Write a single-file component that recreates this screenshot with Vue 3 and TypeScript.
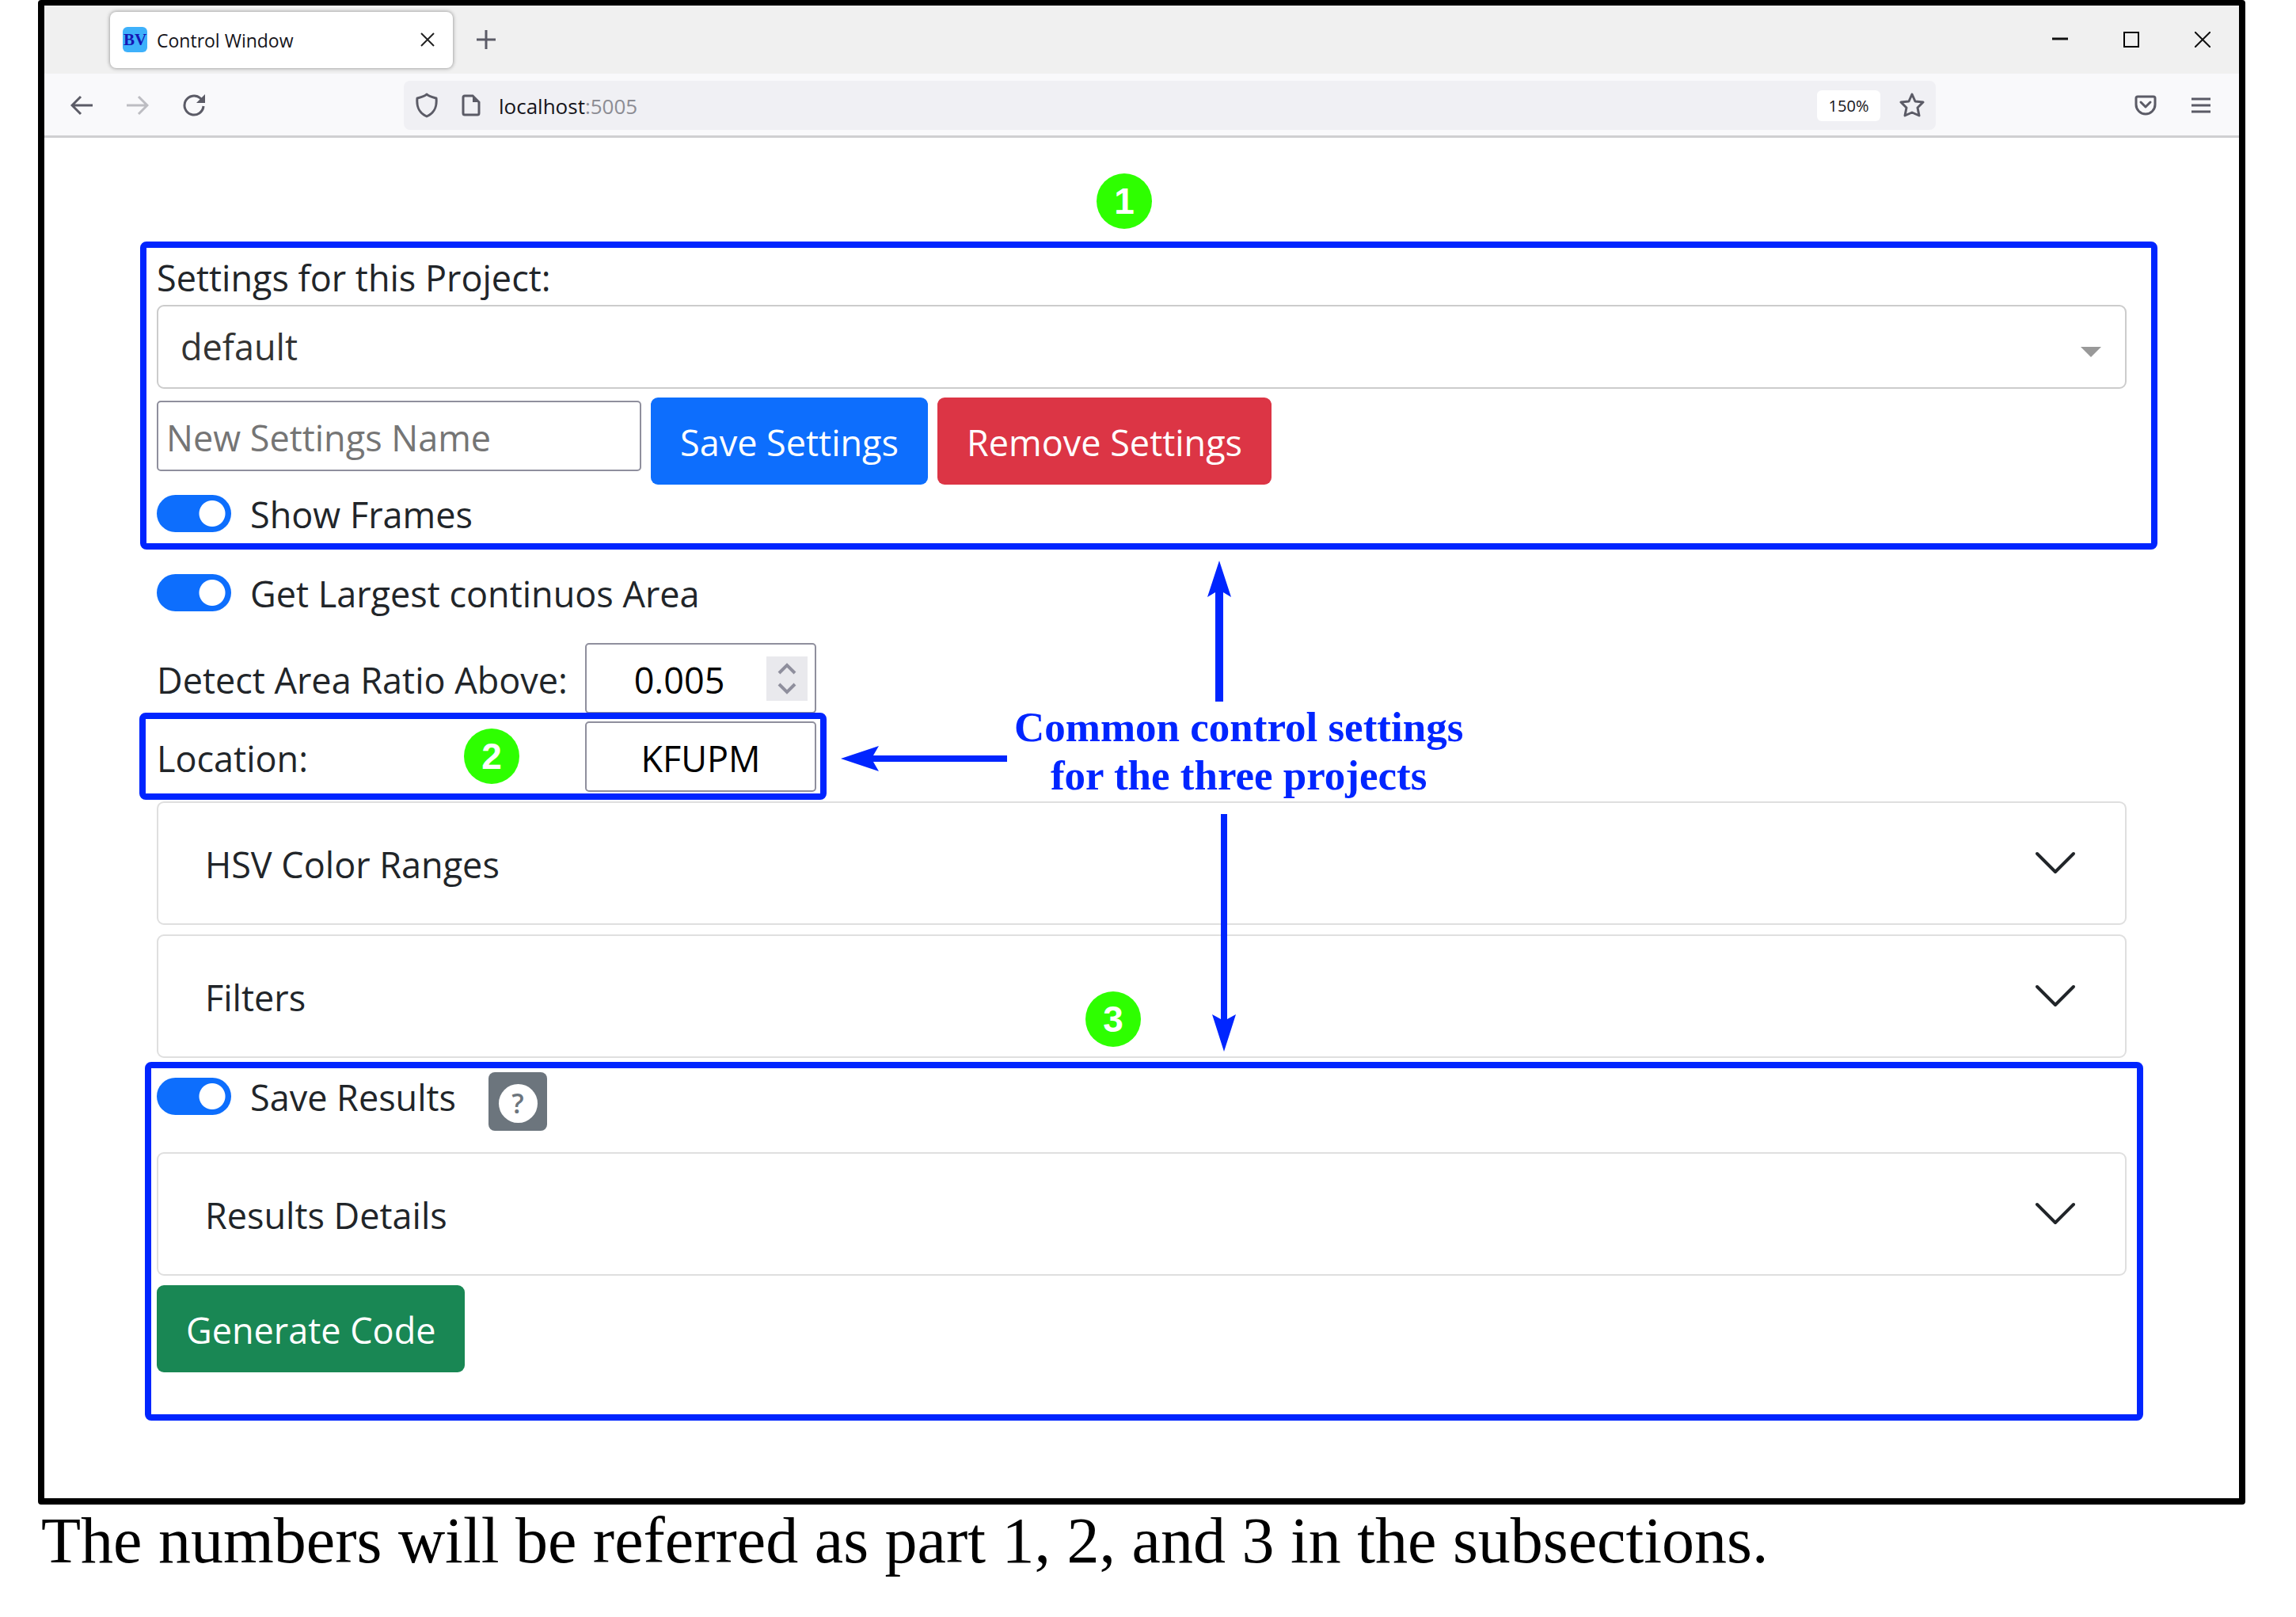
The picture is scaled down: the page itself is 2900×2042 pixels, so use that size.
<script setup lang="ts">
import { ref } from 'vue'

interface Badge {
  label: string
  left: number
  top: number
}

const project = ref('default')
const projects = ['default']
const settingsName = ref('')
const showFrames = ref(true)
const largestArea = ref(true)
const saveResults = ref(true)
const areaRatio = ref(0.005)
const place = ref('KFUPM')
const openPanel = ref('')

const badges: Badge[] = [
  { label: '1', left: 1329, top: 45 },
  { label: '2', left: 530, top: 746 },
  { label: '3', left: 1315, top: 1078 },
]

function step(amount: number) {
  areaRatio.value = Number((areaRatio.value + amount).toFixed(3))
}

function toggle(name: string) {
  openPanel.value = openPanel.value === name ? '' : name
}
</script>

<template>
  <figure class="figure">
    <div class="window">
      <header class="tabstrip">
        <div class="tab">
          <span class="favicon">BV</span>
          <span class="tab-title">Control Window</span>
          <button class="bare" aria-label="Close tab">
            <svg width="20" height="20" viewBox="0 0 20 20"><path d="M2 2L18 18M18 2L2 18" fill="none" stroke="#222" stroke-width="2" /></svg>
          </button>
        </div>
        <button class="bare" aria-label="New tab">
          <svg width="24" height="24" viewBox="0 0 24 24"><path d="M12 0V24M0 12H24" stroke="#5b5b66" stroke-width="3" /></svg>
        </button>
        <div class="window-buttons">
          <button class="bare" aria-label="Minimize">
            <svg width="20" height="20" viewBox="0 0 20 20"><path d="M0 9H20" stroke="#111" stroke-width="3" /></svg>
          </button>
          <button class="bare" aria-label="Maximize">
            <svg width="20" height="20" viewBox="0 0 20 20"><rect x="1" y="1" width="18" height="18" fill="none" stroke="#000" stroke-width="2" /></svg>
          </button>
          <button class="bare" aria-label="Close">
            <svg width="20" height="20" viewBox="0 0 20 20"><path d="M0 0L20 20M20 0L0 20" stroke="#111" stroke-width="2" /></svg>
          </button>
        </div>
      </header>

      <nav class="toolbar">
        <div class="history">
          <button class="bare" aria-label="Back">
            <svg width="28" height="28" viewBox="0 0 28 28"><path d="M28 14H2M13 3L2 14L13 25" fill="none" stroke="#5b5b66" stroke-width="3" /></svg>
          </button>
          <button class="bare" aria-label="Forward">
            <svg width="28" height="28" viewBox="0 0 28 28"><path d="M0 14H26M15 3L26 14L15 25" fill="none" stroke="#bdbdc2" stroke-width="3" /></svg>
          </button>
          <button class="bare" aria-label="Reload">
            <svg width="28" height="28" viewBox="0 0 28 28">
              <path d="M26 15A12 12 0 1 1 22 5L25 8" fill="none" stroke="#5b5b66" stroke-width="3" />
              <path d="M28 0V11H17Z" fill="#5b5b66" />
            </svg>
          </button>
        </div>
        <div class="urlbar">
          <svg width="30" height="32" viewBox="0 0 30 32"><path d="M15 2C18 5 23 6 27 7C28 17 26 25 15 30C4 25 2 17 3 7C7 6 12 5 15 2Z" fill="none" stroke="#5b5b66" stroke-width="3" stroke-linejoin="round" /></svg>
          <svg width="24" height="28" viewBox="0 0 24 28">
            <path d="M4 2H14L22 10V24Q22 26 20 26H4Q2 26 2 24V4Q2 2 4 2Z" fill="none" stroke="#5b5b66" stroke-width="3" />
            <path d="M14 1L23 10H14Z" fill="#5b5b66" />
          </svg>
          <span class="address">localhost<span class="port">:5005</span></span>
          <button class="zoom">150%</button>
          <button class="bare" aria-label="Bookmark">
            <svg width="32" height="32" viewBox="0 0 32 32"><path d="M16 2L20 11L30 12L23 19L25 29L16 25L7 29L9 19L2 12L12 11Z" fill="none" stroke="#5b5b66" stroke-width="3" stroke-linejoin="round" /></svg>
          </button>
        </div>
        <div class="tools">
          <button class="bare" aria-label="Save to Pocket">
            <svg width="28" height="26" viewBox="0 0 28 26">
              <path d="M4 2H24Q26 2 26 4V12A12 12 0 0 1 2 12V4Q2 2 4 2Z" fill="none" stroke="#5b5b66" stroke-width="3" />
              <path d="M8 9L14 15L20 9" fill="none" stroke="#5b5b66" stroke-width="3" stroke-linecap="round" stroke-linejoin="round" />
            </svg>
          </button>
          <button class="bare" aria-label="Menu">
            <svg width="24" height="24" viewBox="0 0 24 24"><path d="M0 4H24M0 12H24M0 20H24" stroke="#5b5b66" stroke-width="3" /></svg>
          </button>
        </div>
      </nav>

      <main class="page">
        <section class="group settings">
          <label class="text-label" for="project">Settings for this Project:</label>
          <div class="select-wrap">
            <select id="project" v-model="project">
              <option v-for="name in projects" :key="name">{{ name }}</option>
            </select>
            <svg class="caret" width="26" height="13" viewBox="0 0 26 13"><path d="M0 0H26L13 13Z" fill="#999" /></svg>
          </div>
          <div class="name-row">
            <input v-model="settingsName" class="field name-field" type="text" placeholder="New Settings Name" aria-label="New Settings Name" />
            <button class="btn primary">Save Settings</button>
            <button class="btn danger">Remove Settings</button>
          </div>
          <label class="switch-row"><input v-model="showFrames" class="switch" type="checkbox" />Show Frames</label>
        </section>

        <label class="switch-row largest"><input v-model="largestArea" class="switch" type="checkbox" />Get Largest continuos Area</label>

        <div class="field-row ratio">
          <label class="text-label" for="ratio">Detect Area Ratio Above:</label>
          <div class="number">
            <input id="ratio" v-model="areaRatio" class="field short" type="number" step="0.001" />
            <div class="spinner">
              <button class="bare" aria-label="Increase" @click="step(0.001)">
                <svg width="24" height="16" viewBox="0 0 24 16"><path d="M2 13L12 3L22 13" fill="none" stroke="#8f8f9d" stroke-width="4" /></svg>
              </button>
              <button class="bare" aria-label="Decrease" @click="step(-0.001)">
                <svg width="24" height="16" viewBox="0 0 24 16"><path d="M2 3L12 13L22 3" fill="none" stroke="#8f8f9d" stroke-width="4" /></svg>
              </button>
            </div>
          </div>
        </div>

        <div class="group field-row location">
          <label class="text-label" for="location">Location:</label>
          <input id="location" v-model="place" class="field short" type="text" />
        </div>

        <button v-for="name in ['HSV Color Ranges', 'Filters']" :key="name" class="accordion" :aria-expanded="openPanel === name" @click="toggle(name)">
          <span class="accordion-title">{{ name }}</span>
          <svg width="52" height="30" viewBox="0 0 52 30"><path d="M3 3L26 26L49 3" fill="none" stroke="#212529" stroke-width="4" stroke-linecap="round" stroke-linejoin="round" /></svg>
        </button>

        <section class="group results">
          <div class="results-row">
            <label class="switch-row"><input v-model="saveResults" class="switch" type="checkbox" />Save Results</label>
            <button class="help" aria-label="Help"><span class="help-mark">?</span></button>
          </div>
          <button class="accordion" :aria-expanded="openPanel === 'Results Details'" @click="toggle('Results Details')">
            <span class="accordion-title">Results Details</span>
            <svg width="52" height="30" viewBox="0 0 52 30"><path d="M3 3L26 26L49 3" fill="none" stroke="#212529" stroke-width="4" stroke-linecap="round" stroke-linejoin="round" /></svg>
          </button>
          <button class="btn success">Generate Code</button>
        </section>

        <!-- Annotations drawn over the form -->
        <svg class="arrows" width="500" height="622" viewBox="0 0 500 622">
          <g fill="#0025ff">
            <path d="M478 0L493 46L483 40V178H473V40L463 46Z" />
            <path d="M0 250L48 234L41 246H210V254H41L48 266Z" />
            <path d="M484 620L469 573L480 579V320H488V579L499 573Z" />
          </g>
        </svg>
        <p class="callout">Common control settings<br />for the three projects</p>
        <span v-for="badge in badges" :key="badge.label" class="badge" :style="{ left: badge.left + 'px', top: badge.top + 'px' }">{{ badge.label }}</span>
      </main>
    </div>
    <figcaption class="caption">The numbers will be referred as part 1, 2, and 3 in the subsections.</figcaption>
  </figure>
</template>

<style>
body {
  background: #fff;
}
</style>

<style scoped>
* {
  box-sizing: border-box;
}

.figure {
  margin: 0;
  padding: 0 64px 0 48px;
}

.window {
  border: 8px solid #000;
  border-top-width: 7px;
  border-radius: 4px;
  background: #fff;
  color: #212529;
  font-family: "Open Sans", "Noto Sans", sans-serif;
  font-size: 45px;
  line-height: 68px;
}

button,
input,
select {
  margin: 0;
  font: inherit;
}

svg {
  display: block;
  flex: none;
}

.bare {
  padding: 0;
  border: 0;
  background: none;
}

.tabstrip {
  display: flex;
  align-items: center;
  height: 86px;
  padding: 0 36px 0 83px;
  background: #f0f0f0;
}

.tab {
  display: flex;
  align-items: center;
  gap: 12px;
  width: 433px;
  height: 71px;
  margin-right: 30px;
  padding: 0 22px 0 16px;
  border-radius: 8px;
  background: #fff;
  box-shadow: 0 0 5px rgba(0, 0, 0, 0.45);
  color: #15141a;
  font-size: 23px;
  line-height: 32px;
}

.favicon {
  width: 31px;
  height: 32px;
  border-radius: 6px;
  background: #3eb1fb;
  color: #1616b4;
  font-family: "Liberation Serif", serif;
  font-size: 21px;
  font-weight: bold;
  text-align: center;
}

.tab-title {
  flex: 1;
  padding-top: 2px;
}

.window-buttons {
  display: flex;
  gap: 70px;
  margin-left: auto;
}

.toolbar {
  display: flex;
  align-items: center;
  height: 81px;
  padding: 2px 36px 0 33px;
  border-bottom: 3px solid #cfcfd1;
  background: #f9f9fb;
}

.history {
  display: flex;
  gap: 43px;
  margin-right: 251px;
}

.urlbar {
  display: flex;
  flex: 1;
  align-items: center;
  height: 62px;
  padding: 0 14px;
  border-radius: 8px;
  background: #f0f0f4;
}

.address {
  flex: 1;
  margin-left: 23px;
  padding-top: 2px;
  color: #15141a;
  font-size: 26px;
  line-height: 32px;
}

.urlbar > svg + svg {
  margin-left: 29px;
}

.port {
  color: #8c8c93;
}

.zoom {
  width: 80px;
  height: 39px;
  margin-right: 24px;
  padding: 0;
  border: 0;
  border-radius: 6px;
  background: #fff;
  color: #15141a;
  font-size: 20px;
  line-height: 39px;
}

.tools {
  display: flex;
  align-items: center;
  gap: 44px;
  margin-left: 251px;
}

.page {
  position: relative;
  padding: 143px 142px 107px;
}

/* Blue outline drawn round a group of controls */
.group {
  position: relative;
}

.group::after {
  content: "";
  position: absolute;
  border: 8px solid #0025ff;
  border-radius: 8px;
  pointer-events: none;
}

.settings::after {
  inset: -12px -39px -10px -21px;
}

.location::after {
  inset: -11px -13px -10px -22px;
}

.results::after {
  inset: -11px -21px -9px -15px;
}

.text-label {
  display: block;
}

.select-wrap {
  position: relative;
}

select {
  display: block;
  width: 100%;
  height: 106px;
  padding: 0 80px 0 28px;
  border: 2px solid #ccc;
  border-radius: 9px;
  appearance: none;
  background: #fff;
  color: #333;
}

.caret {
  position: absolute;
  top: 53px;
  right: 32px;
}

.name-row {
  display: flex;
  gap: 12px;
  align-items: flex-start;
  margin: 11px 0 4px;
}

.field {
  height: 89px;
  padding: 4px 10px 0;
  border: 2px solid #8f8f9d;
  border-radius: 5px;
  background: #fff;
  color: #000;
}

.field::placeholder {
  color: #757575;
}

.name-field {
  width: 612px;
  margin-top: 4px;
}

.btn {
  display: block;
  height: 110px;
  padding: 4px 37px 0;
  border: 0;
  border-radius: 9px;
  color: #fff;
}

.primary {
  background: #0d6efd;
}

.danger {
  background: #dc3545;
}

.success {
  background: #198754;
}

.switch-row {
  display: flex;
  gap: 24px;
  align-items: center;
}

.switch {
  width: 94px;
  height: 47px;
  margin-bottom: 4px;
  border-radius: 24px;
  appearance: none;
  background: radial-gradient(circle at 24px 50%, #fff 16px, transparent 17px) #adb5bd;
}

.switch:checked {
  background: radial-gradient(circle at 70px 50%, #fff 16px, transparent 17px) #0d6efd;
}

.largest {
  margin-top: 32px;
}

.field-row {
  display: flex;
  align-items: baseline;
  width: 833px;
}

.field-row .text-label {
  flex: 1;
}

.ratio {
  margin-top: 28px;
}

.location {
  margin-top: 10px;
  margin-bottom: 12px;
}

.short {
  display: block;
  width: 292px;
  text-align: center;
}

.number {
  position: relative;
}

.number .short {
  padding-right: 64px;
  appearance: textfield;
}

.number .short::-webkit-inner-spin-button {
  appearance: none;
}

.spinner {
  position: absolute;
  top: 17px;
  right: 11px;
  display: flex;
  flex-direction: column;
  align-items: center;
  justify-content: center;
  gap: 8px;
  width: 52px;
  height: 56px;
  background: #e9e9ed;
}

.accordion {
  display: flex;
  align-items: center;
  justify-content: space-between;
  width: 100%;
  height: 156px;
  margin-bottom: 12px;
  padding: 0 62px 0 59px;
  border: 2px solid #dfdfdf;
  border-radius: 9px;
  background: #fff;
  color: #212529;
  text-align: left;
}

.accordion-title {
  padding-top: 4px;
}

.results {
  margin-top: 16px;
  padding-bottom: 52px;
}

.results-row {
  display: flex;
  gap: 41px;
  align-items: flex-start;
  margin-bottom: 27px;
}

.help {
  display: flex;
  align-items: center;
  justify-content: center;
  width: 74px;
  height: 74px;
  margin-top: 2px;
  padding: 4px 0 0;
  border: 0;
  border-radius: 8px;
  background: #6c757d;
}

.help-mark {
  width: 49px;
  height: 49px;
  border-radius: 50%;
  background: #fff;
  color: #6c757d;
  font-size: 34px;
  font-weight: 600;
  line-height: 49px;
}

.arrows {
  position: absolute;
  top: 534px;
  left: 1006px;
}

.callout {
  position: absolute;
  top: 714px;
  left: 1225px;
  margin: 0;
  color: #0025ff;
  font-family: "Liberation Serif", serif;
  font-size: 53px;
  font-weight: bold;
  line-height: 61px;
  text-align: center;
  white-space: nowrap;
}

.badge {
  position: absolute;
  width: 70px;
  height: 70px;
  border-radius: 50%;
  background: #2eff00;
  color: #fff;
  font-family: "Liberation Sans", sans-serif;
  font-size: 46px;
  font-weight: bold;
  line-height: 70px;
  text-align: center;
}

.caption {
  padding-left: 4px;
  color: #000;
  font-family: "Liberation Serif", serif;
  font-size: 82px;
  line-height: 92px;
}
</style>
